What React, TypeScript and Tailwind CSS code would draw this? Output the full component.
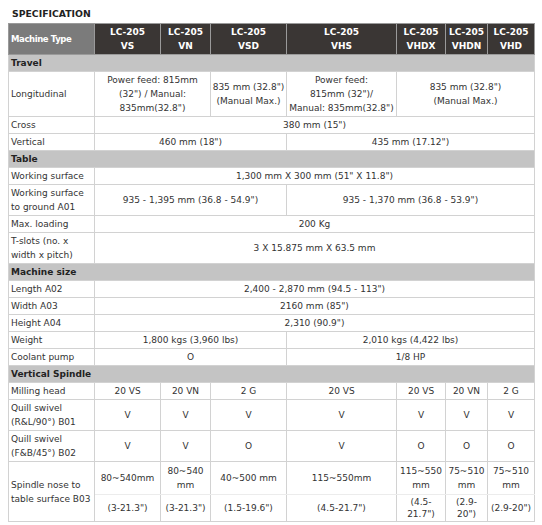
import React from 'react';

type Cell = { text: React.ReactNode; span?: number };

const cols = [86, 66, 50, 76, 110, 49, 42, 47];
const models = [
  ['LC-205', 'VS'],
  ['LC-205', 'VN'],
  ['LC-205', 'VSD'],
  ['LC-205', 'VHS'],
  ['LC-205', 'VHDX'],
  ['LC-205', 'VHDN'],
  ['LC-205', 'VHD'],
];

const td = 'border border-[#d2d2d2] px-[2px] py-px text-center align-middle';
const label = 'border border-[#d2d2d2] pl-[2px] pr-[1px] py-px text-left align-middle';

function Section({ title }: { title: string }) {
  return (
    <tr>
      <td colSpan={8} className="border border-[#d2d2d2] bg-[#c4c4c4] px-[2px] py-px font-bold text-[#222]">
        {title}
      </td>
    </tr>
  );
}

function Row({ name, cells }: { name: React.ReactNode; cells: Cell[] }) {
  return (
    <tr>
      <td className={label}>{name}</td>
      {cells.map((c, i) => (
        <td key={i} colSpan={c.span ?? 1} className={td}>
          {c.text}
        </td>
      ))}
    </tr>
  );
}

export default function App() {
  return (
    <div className="min-h-[525px] bg-white pt-[7px] pl-[8px] text-[9px] leading-[14px] text-[#333]" style={{ fontFamily: '"DejaVu Sans", Verdana, sans-serif' }}>
      <div className="pl-[4px] text-[9.3px] font-bold text-[#222]">SPECIFICATION</div>
      <table className="mt-[2px] w-[526px] table-fixed border-collapse">
        <colgroup>
          {cols.map((w, i) => (
            <col key={i} style={{ width: w }} />
          ))}
        </colgroup>
        <thead>
          <tr>
            <th className="border border-[#9a9a9a] bg-[#7b7b7b] pl-[2px] text-left text-[8.5px] font-bold tracking-[-0.4px] text-white">
              Machine Type
            </th>
            {models.map(([a, b]) => (
              <th key={b} className="border border-[#9a9a9a] bg-[#3a3634] py-px text-center text-[9px] font-bold leading-[14px] text-white">
                {a}
                <br />
                {b}
              </th>
            ))}
          </tr>
        </thead>
        <tbody>
          <Section title="Travel" />
          <Row
            name="Longitudinal"
            cells={[
              { text: <>Power feed: 815mm<br />(32") / Manual:<br />835mm(32.8")</>, span: 2 },
              { text: <span className="-mx-[2px] block whitespace-nowrap">835 mm (32.8")<br />(Manual Max.)</span> },
              { text: <>Power feed:<br />815mm (32")/<br />Manual: 835mm(32.8")</> },
              { text: <>835 mm (32.8")<br />(Manual Max.)</>, span: 3 },
            ]}
          />
          <Row name="Cross" cells={[{ text: '380 mm (15")', span: 7 }]} />
          <Row
            name="Vertical"
            cells={[
              { text: '460 mm (18")', span: 3 },
              { text: '435 mm (17.12")', span: 4 },
            ]}
          />
          <Section title="Table" />
          <Row name="Working surface" cells={[{ text: '1,300 mm X 300 mm (51" X 11.8")', span: 7 }]} />
          <Row
            name={<>Working surface<br />to ground A01</>}
            cells={[
              { text: '935 - 1,395 mm (36.8 - 54.9")', span: 3 },
              { text: '935 - 1,370 mm (36.8 - 53.9")', span: 4 },
            ]}
          />
          <Row name="Max. loading" cells={[{ text: '200 Kg', span: 7 }]} />
          <Row name={<>T-slots (no. x<br />width x pitch)</>} cells={[{ text: '3 X 15.875 mm X 63.5 mm', span: 7 }]} />
          <Section title="Machine size" />
          <Row name="Length A02" cells={[{ text: '2,400 - 2,870 mm (94.5 - 113")', span: 7 }]} />
          <Row name="Width A03" cells={[{ text: '2160 mm (85")', span: 7 }]} />
          <Row name="Height A04" cells={[{ text: '2,310 (90.9")', span: 7 }]} />
          <Row
            name="Weight"
            cells={[
              { text: '1,800 kgs (3,960 lbs)', span: 3 },
              { text: '2,010 kgs (4,422 lbs)', span: 4 },
            ]}
          />
          <Row
            name="Coolant pump"
            cells={[
              { text: 'O', span: 3 },
              { text: '1/8 HP', span: 4 },
            ]}
          />
          <Section title="Vertical Spindle" />
          <Row name="Milling head" cells={['20 VS', '20 VN', '2 G', '20 VS', '20 VS', '20 VN', '2 G'].map((t) => ({ text: t }))} />
          <Row name={<>Quill swivel<br />(R&amp;L/90°) B01</>} cells={['V', 'V', 'V', 'V', 'V', 'V', 'V'].map((t) => ({ text: t }))} />
          <Row name={<>Quill swivel<br />(F&amp;B/45°) B02</>} cells={['V', 'V', 'O', 'V', 'O', 'O', 'O'].map((t) => ({ text: t }))} />
          <tr>
            <td rowSpan={2} className={label}>
              Spindle nose to
              <br />
              table surface B03
            </td>
            <td className={td + ' h-[33px] border-b-[#ececec]'}>80~540mm</td>
            <td className={td + ' border-b-[#ececec]'}>80~540<br />mm</td>
            <td className={td + ' border-b-[#ececec]'}>40~500 mm</td>
            <td className={td + ' border-b-[#ececec]'}>115~550mm</td>
            <td className={td + ' border-b-[#ececec]'}>115~550<br />mm</td>
            <td className={td + ' border-b-[#ececec]'}>75~510<br />mm</td>
            <td className={td + ' border-b-[#ececec]'}>75~510<br />mm</td>
          </tr>
          <tr>
            <td className={td + ' leading-[12px]'}>(3-21.3")</td>
            <td className={td + ' leading-[12px]'}>(3-21.3")</td>
            <td className={td + ' leading-[12px]'}>(1.5-19.6")</td>
            <td className={td + ' leading-[12px]'}>(4.5-21.7")</td>
            <td className={td + ' leading-[12px]'}>(4.5-<br />21.7")</td>
            <td className={td + ' leading-[12px]'}>(2.9-<br />20")</td>
            <td className={td + ' leading-[12px]'}>(2.9-20")</td>
          </tr>
        </tbody>
      </table>
    </div>
  );
}
